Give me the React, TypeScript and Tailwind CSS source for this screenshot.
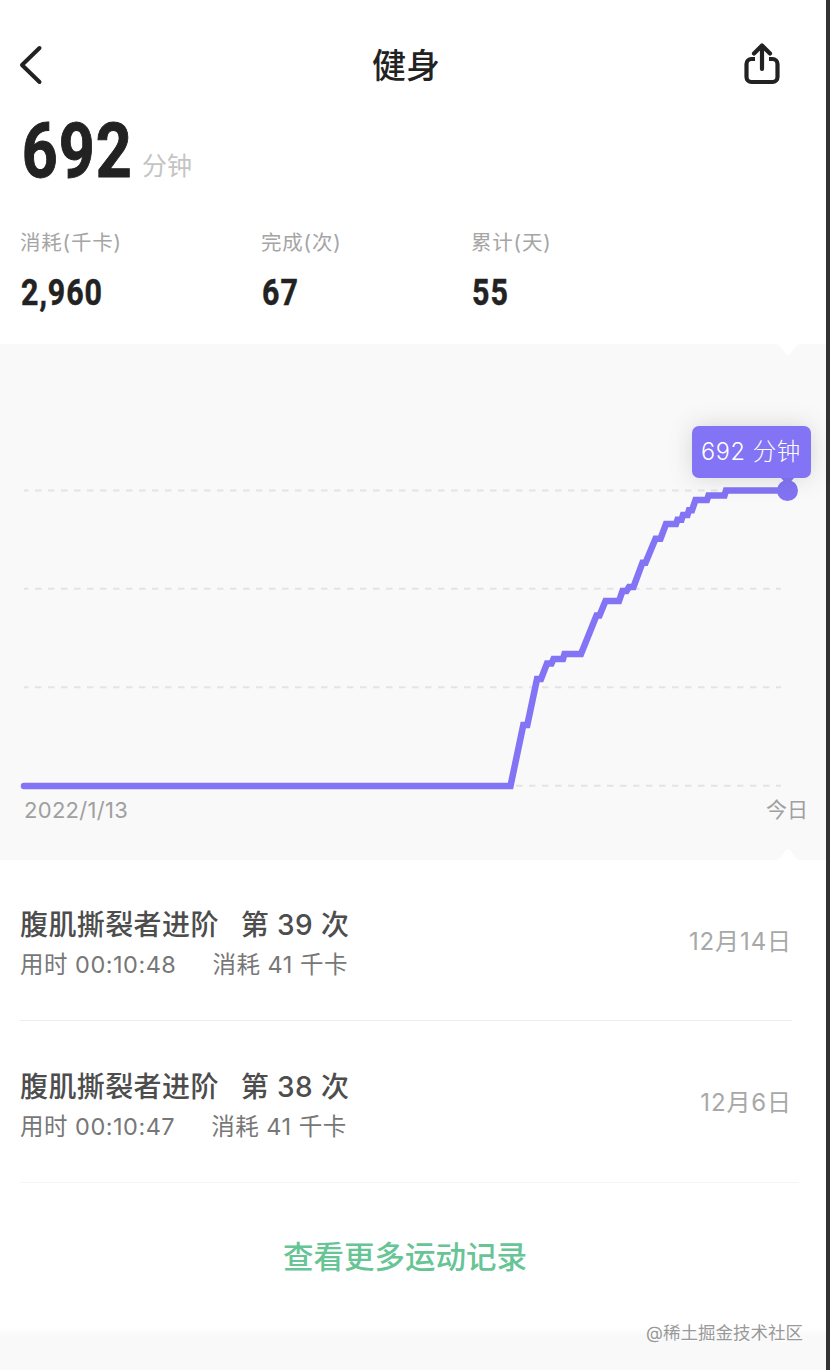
const stats = [
  { label: "消耗(千卡)", value: "2,960", width: "w-[241px]" },
  { label: "完成(次)", value: "67", width: "w-[210px]" },
  { label: "累计(天)", value: "55", width: "w-[200px]" },
];

const records = [
  { count: 39, time: "00:10:48", date: "12月14日" },
  { count: 38, time: "00:10:47", date: "12月6日" },
];

const gridLines = [146.5, 244.7, 343.3, 441.7];

const points =
  "24,442 510.5,442 523.3,381 527.3,381 537,335 541,335 547,319.5 551.5,319.5 553.5,315 563,315 564.5,310 581,310 596.5,271.5 599.5,271.5 605.5,257 619,257 622.5,247 626.5,247 629,243 633.5,243 642.5,218.7 645.5,218.7 655.5,194.7 660.5,194.7 666,180 676,180 677.5,175.7 681.5,175.7 683,171 687.5,171 689,166.3 692,166.3 695.5,156 707,156 708.5,151.5 724.5,151.5 726,146.5 788,146.5";

function Header() {
  return (
    <header className="flex h-[104px] items-center justify-between pt-[26px] pr-[46px] pl-[18px]">
      <svg width="50" height="42" viewBox="0 0 50 42" fill="none" stroke="#222" strokeWidth="4" strokeLinecap="round" strokeLinejoin="round">
        <path d="M21.500 4 4 21 21.500 38" />
      </svg>
      <h1 className="pt-px text-[34px] leading-[40px] font-medium text-[#222]">健身</h1>
      <svg width="36" height="44" viewBox="0 0 36 44" fill="none" stroke="#222" strokeWidth="4.200" strokeLinecap="round" strokeLinejoin="round">
        <path d="M11 16H7.500a5 5 0 0 0-5 5v13a5 5 0 0 0 5 5h21a5 5 0 0 0 5-5V21a5 5 0 0 0-5-5H25" strokeLinecap="butt" />
        <path d="M18 26V2.500M10 10.500l8-8 8 8" />
      </svg>
    </header>
  );
}

function Summary() {
  return (
    <section className="h-[240px] pl-[21px]">
      <div className="flex h-[94px] items-start">
        <span className="w-[121px] origin-left scale-x-[0.82] pl-px font-[Roboto] text-[76.5px] leading-[94px] font-bold tracking-[1.2px] text-[#222] [-webkit-text-stroke:1px_#222]">692</span>
        <span className="pt-[46px] text-[25px] leading-[32px] text-[#c4c4c4]">分钟</span>
      </div>
      <div className="flex pt-[30px]">
        {stats.map((s) => (
          <div key={s.label} className={s.width}>
            <div className="relative -left-px text-[20.5px] leading-[30px] tracking-[0.8px] text-[#a5a5a5]">{s.label}</div>
            <div className="mt-[12px] w-fit origin-left scale-x-[0.82] font-[Roboto] text-[37px] leading-[46px] font-bold tracking-[1.2px] text-[#222] [-webkit-text-stroke:0.5px_#222]">{s.value}</div>
          </div>
        ))}
      </div>
    </section>
  );
}

function Chart() {
  return (
    <section className="relative h-[516px] bg-[#f9f9f9]">
      <svg width="826" height="516" viewBox="0 0 826 516" fill="none">
        <path d="M777 0 Q783 5 785 9 Q788 13 791 9 Q793 5 799 0 Z M777 516 Q783 511 785 507 Q788 503 791 507 Q793 511 799 516 Z" fill="#fff" />
        {gridLines.map((y) => (
          <path key={y} d={`M24 ${y}H781`} stroke="#e4e4e4" strokeWidth="2" strokeDasharray="6.5 6.5" strokeDashoffset="2" />
        ))}
        <polyline points={points} stroke="#8373f5" strokeWidth="6.5" strokeLinejoin="miter" strokeLinecap="round" />
        <path d="M780 133h15l-7.500 8z" fill="#8373f5" />
        <circle cx="787.500" cy="146.500" r="10.500" fill="#8373f5" />
      </svg>
      <div className="absolute top-[82px] left-[692px] flex h-[52px] w-[119px] items-center justify-center rounded-[7px] bg-[#8373f5] pr-px text-[23.5px] font-light tracking-[0.6px] whitespace-nowrap text-white shadow-[0_0_24px_rgba(60,80,60,0.2)]">
        692 分钟
      </div>
      <div className="absolute top-[450px] right-[18px] left-[24px] flex justify-between text-[21px] leading-[32px] text-[#a0a0a0]">
        <span className="text-[22px] tracking-[0.3px]">2022/1/13</span>
        <span>今日</span>
      </div>
    </section>
  );
}

export default function App() {
  return (
    <div className="flex h-[1370px] w-[830px] overflow-hidden bg-[#333] font-[Inter,'Noto_Sans_CJK_SC',sans-serif]">
      <main className="w-[826px] bg-white">
        <Header />
        <Summary />
        <Chart />
        <ul className="pr-[27px] pl-[20px]">
          {records.map((r, i) => (
            <li
              key={r.count}
              className={
                i === 0
                  ? "mr-[7px] flex h-[161px] items-center justify-between border-b border-[#ededed]"
                  : "flex h-[162px] items-center justify-between border-b border-[#f5f5f5] pr-[7px]"
              }
            >
              <div className="pt-[10px]">
                <div className="flex gap-[22px] text-[28px] leading-[40px] font-medium tracking-[0.4px] text-[#4d4d4d]">
                  <span>腹肌撕裂者进阶</span>
                  <span>第 {r.count} 次</span>
                </div>
                <div className="flex gap-[36px] text-[23.5px] leading-[40px] tracking-[0.5px] text-[#777]">
                  <span>用时 {r.time}</span>
                  <span>消耗 41 千卡</span>
                </div>
              </div>
              <div className="pt-[3px] text-[24px] leading-[36px] tracking-[0.9px] text-[#a8a8a8]">{r.date}</div>
            </li>
          ))}
        </ul>
        <button className="block h-[144px] w-full pt-[4px] pr-[16px] text-center text-[30.5px] font-medium text-[#66c495]">查看更多运动记录</button>
        <footer className="flex h-[43px] justify-end bg-linear-to-b from-white to-[#f9f9f9] to-20% pr-[23px]">
          <span className="-mt-[10px] text-[17.5px] leading-[32px] text-[#999] [text-shadow:1px_1px_1px_#fff]">@稀土掘金技术社区</span>
        </footer>
      </main>
    </div>
  );
}
